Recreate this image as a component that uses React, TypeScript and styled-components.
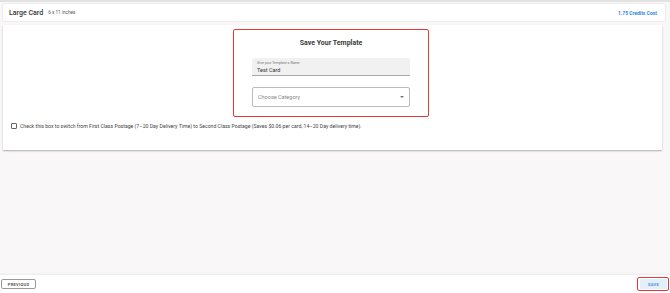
import React from "react";
import styled, { createGlobalStyle } from "styled-components";

const Global = createGlobalStyle`
  html, body { margin: 0; padding: 0; }
  body { font-family: Roboto, "Liberation Sans", Arial, sans-serif; background: #f9f7f7; }
  * { box-sizing: border-box; }
`;

const Page = styled.div`
  width: 670px;
  height: 293px;
  display: flex;
  flex-direction: column;
  background: #f9f7f7;
  border-top: 2px solid #e2e2e2;
`;

const Header = styled.div`
  margin: 1px 4px 0 2px;
  height: 19px;
  background: #fff;
  border: 1px solid #ececec;
  border-radius: 3px;
  display: flex;
  align-items: center;
  padding: 0 8px 0 6px;
`;

const Title = styled.span`
  font-size: 7px;
  font-weight: 500;
  color: #333;
`;

const Sub = styled.span`
  font-size: 4.7px;
  color: #555;
  margin-left: 5px;
`;

const Credits = styled.span`
  margin-left: auto;
  font-size: 5px;
  font-weight: 700;
  color: #2f86e0;
`;

const Card = styled.div`
  margin: 3px 8px 0 3px;
  height: 125px;
  background: #fff;
  box-shadow: 0 1px 1.5px rgba(0, 0, 0, 0.3);
  display: flex;
  flex-direction: column;
  padding: 4px 0 0 8px;
`;

const Form = styled.div`
  align-self: center;
  margin-left: -11px;
  width: 196px;
  height: 88px;
  border: 1.5px solid #e53935;
  border-radius: 2px;
  display: flex;
  flex-direction: column;
  align-items: center;
  padding-top: 9px;
`;

const FormTitle = styled.div`
  font-size: 7px;
  font-weight: 700;
  color: #3a3a3a;
`;

const Filled = styled.div`
  margin-top: 11px;
  width: 158px;
  height: 18px;
  background: #f1f1f1;
  border-bottom: 1px solid #aaa;
  border-radius: 2px 2px 0 0;
  padding: 3px 0 0 5px;
  display: flex;
  flex-direction: column;
`;

const Label = styled.span`
  font-size: 3.5px;
  color: #777;
`;

const Value = styled.span`
  font-size: 5.5px;
  color: #333;
  margin-top: 2px;
`;

const Select = styled.div`
  margin-top: 11px;
  width: 158px;
  height: 20px;
  border: 1px solid #bbb;
  border-radius: 2px;
  display: flex;
  align-items: center;
  padding: 0 5px;
  font-size: 5.5px;
  color: #888;
`;

const Caret = styled.span`
  margin-left: auto;
  width: 0;
  height: 0;
  border-left: 2px solid transparent;
  border-right: 2px solid transparent;
  border-top: 2px solid #777;
`;

const CheckRow = styled.div`
  display: flex;
  align-items: center;
  margin-top: 6px;
  gap: 3px;
`;

const Box = styled.span`
  width: 6px;
  height: 6px;
  border: 1px solid #666;
  border-radius: 1px;
`;

const CheckText = styled.span`
  font-size: 5.15px;
  color: #444;
`;

const Spacer = styled.div`
  flex: 1;
`;

const Footer = styled.div`
  height: 18px;
  background: #fff;
  box-shadow: 0 -1px 2px rgba(0, 0, 0, 0.06);
  display: flex;
  align-items: center;
  justify-content: space-between;
  padding: 0 1px 0 1px;
`;

const Prev = styled.button`
  height: 10px;
  width: 35px;
  padding: 0;
  border: 1px solid #999;
  border-radius: 2px;
  background: #fff;
  font-family: inherit;
  font-size: 4px;
  font-weight: 700;
  letter-spacing: 0.3px;
  color: #555;
`;

const SaveWrap = styled.div`
  border: 1.5px solid #e53935;
  border-radius: 2px;
  padding: 1px 1px 1px 2px;
  display: flex;
`;

const Save = styled.button`
  height: 10px;
  width: 27px;
  padding: 0;
  border: none;
  border-radius: 1px;
  background: #e3f0fc;
  font-family: inherit;
  font-size: 4px;
  font-weight: 700;
  letter-spacing: 0.3px;
  color: #4a8fd8;
`;

export default function App() {
  return (
    <>
      <Global />
      <Page>
        <Header>
          <Title>Large Card</Title>
          <Sub>6 x 11 inches</Sub>
          <Credits>1.75 Credits Cost</Credits>
        </Header>
        <Card>
          <Form>
            <FormTitle>Save Your Template</FormTitle>
            <Filled>
              <Label>Give your Template a Name</Label>
              <Value>Test Card</Value>
            </Filled>
            <Select>
              Choose Category
              <Caret />
            </Select>
          </Form>
          <CheckRow>
            <Box />
            <CheckText>
              Check this box to switch from First Class Postage (7–20 Day Delivery Time) to Second Class Postage (Saves $0.06 per card, 14–20 Day delivery time).
            </CheckText>
          </CheckRow>
        </Card>
        <Spacer />
        <Footer>
          <Prev>PREVIOUS</Prev>
          <SaveWrap>
            <Save>SAVE</Save>
          </SaveWrap>
        </Footer>
      </Page>
    </>
  );
}
